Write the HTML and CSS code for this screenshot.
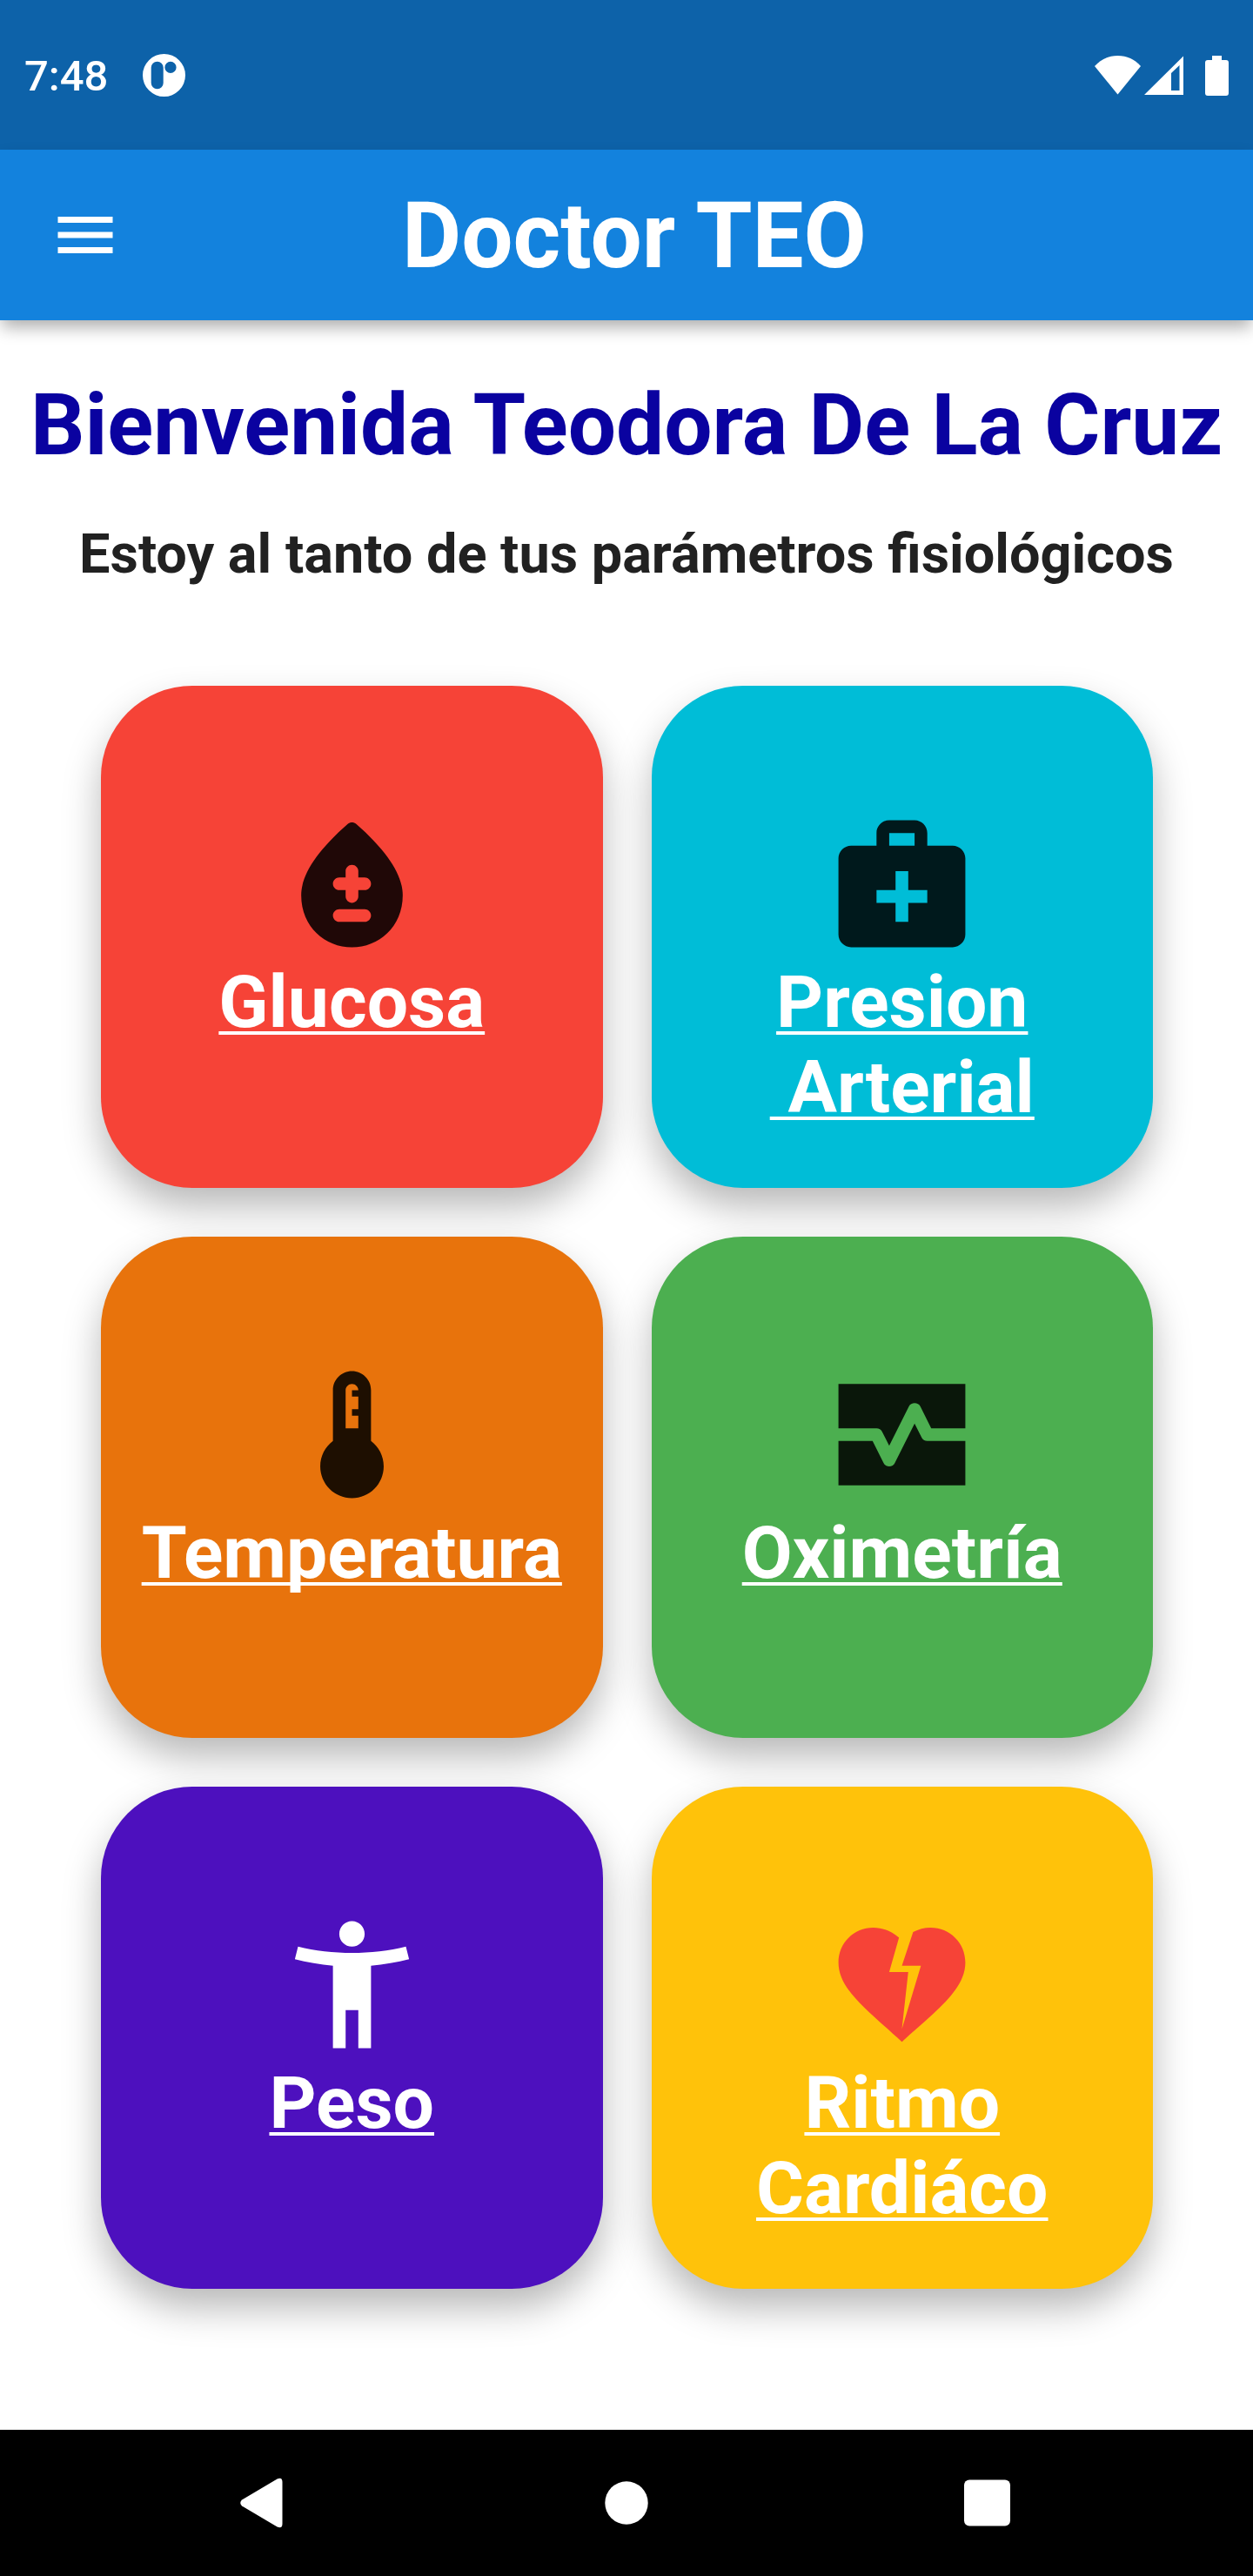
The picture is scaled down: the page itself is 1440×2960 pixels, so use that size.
FILE: index.html
```html
<!DOCTYPE html>
<html lang="es">
<head>
<meta charset="utf-8">
<meta name="viewport" content="width=device-width, initial-scale=1">
<title>Doctor TEO</title>
<link rel="stylesheet" href="styles.css">
</head>
<body>
<div class="status-bar">
  <div class="status-group">
    <time class="clock">7:48</time>
    <svg class="notification-icon" viewBox="0 0 49 49" aria-hidden="true">
      <path fill-rule="evenodd" d="M24.500 0a24.500 24.500 0 1 1 0 49a24.500 24.500 0 1 1 0-49zM16.700 8.700a7 7 0 0 0-7 7v17.500a7 7 0 0 0 14 0v-17.500a7 7 0 0 0-7-7zM32 8.800a6.600 6.600 0 1 0 0 13.200a6.600 6.600 0 1 0 0-13.200z"/>
    </svg>
  </div>
  <svg class="signal-icons" viewBox="0 -1 154 49" aria-hidden="true">
    <path d="M0 13C7 5 16 1 26.500 1S46 5 53 13L26.500 45.500z"/>
    <path fill-rule="evenodd" d="M57 46L102 1.500V46zM88 21v20h9.500V12z"/>
    <path d="M135 1h11v5h5q3 0 3 3v35q0 3-3 3h-21q-3 0-3-3V9q0-3 3-3h5z"/>
  </svg>
</div>

<header class="app-bar">
  <button class="menu-button" type="button" aria-label="Abrir menú">
    <svg viewBox="0 0 24 24" aria-hidden="true"><path d="M3 18h18v-2H3v2zm0-5h18v-2H3v2zm0-7v2h18V6H3z"/></svg>
  </button>
  <h1 class="app-title">Doctor TEO</h1>
</header>

<main class="content">
  <h2 class="welcome">Bienvenida Teodora De La Cruz</h2>
  <p class="subtitle">Estoy al tanto de tus parámetros fisiológicos</p>

  <nav class="card-grid" aria-label="Parámetros">
    <a class="card card-glucose" href="#glucosa">
      <svg class="card-icon" viewBox="0 0 24 24" aria-hidden="true"><path fill-rule="evenodd" d="M12.660 2.580c-.38-.33-.95-.33-1.320 0C6.450 6.880 4 10.620 4 13.800c0 4.980 3.800 8.200 8 8.200s8-3.220 8-8.200c0-3.180-2.450-6.920-7.340-11.220zM14 18h-4c-.55 0-1-.45-1-1s.45-1 1-1h4c.55 0 1 .45 1 1s-.45 1-1 1zM14 13h-1v1c0 .55-.45 1-1 1s-1-.45-1-1v-1h-1c-.55 0-1-.45-1-1s.45-1 1-1h1v-1c0-.55.45-1 1-1s1 .45 1 1v1h1c.55 0 1 .45 1 1s-.45 1-1 1z"/></svg>
      <span class="card-label">Glucosa</span>
    </a>
    <a class="card card-pressure" href="#presion">
      <svg class="card-icon" viewBox="0 0 24 24" aria-hidden="true"><path fill-rule="evenodd" d="M20 6h-4V4c0-1.100-.9-2-2-2h-4c-1.100 0-2 .9-2 2v2H4c-1.100 0-2 .9-2 2v12c0 1.100.9 2 2 2h16c1.100 0 2-.9 2-2V8c0-1.100-.9-2-2-2zM10 4h4v2h-4V4zm6 11h-3v3h-2v-3H8v-2h3v-3h2v3h3v2z"/></svg>
      <span class="card-label">Presion<br>&nbsp;Arterial</span>
    </a>
    <a class="card card-temperature" href="#temperatura">
      <svg class="card-icon" viewBox="0 0 24 24" aria-hidden="true"><path fill-rule="evenodd" d="M15 13V5c0-1.660-1.340-3-3-3S9 3.340 9 5v8c-1.210.91-2 2.370-2 4 0 2.760 2.240 5 5 5s5-2.240 5-5c0-1.630-.79-3.090-2-4zm-4-8c0-.55.45-1 1-1s1 .45 1 1h-1v1h1v2h-1v1h1v2h-2V5z"/></svg>
      <span class="card-label">Temperatura</span>
    </a>
    <a class="card card-oximetry" href="#oximetria">
      <svg class="card-icon" viewBox="0 0 24 24" aria-hidden="true"><path d="M15.110 12.450 14 10.240l-3.110 6.210c-.16.34-.51.55-.89.55s-.73-.21-.89-.55L7.380 13H2v7h20v-7h-6c-.38 0-.73-.21-.89-.55zM22 4H2v7h6c.38 0 .73.21.89.55L10 13.760l3.110-6.210c.34-.68 1.450-.68 1.790 0L16.620 11H22V4z"/></svg>
      <span class="card-label">Oximetría</span>
    </a>
    <a class="card card-weight" href="#peso">
      <svg class="card-icon" viewBox="0 0 24 24" aria-hidden="true"><path d="M20.500 6c-2.610.7-5.670 1-8.500 1s-5.890-.3-8.500-1L3 8c1.860.5 4 .83 6 1v13h2v-6h2v6h2V9c2-.17 4.140-.5 6-1l-.5-2zM12 6c1.100 0 2-.9 2-2s-.9-2-2-2-2 .9-2 2 .9 2 2 2z"/></svg>
      <span class="card-label">Peso</span>
    </a>
    <a class="card card-heart" href="#ritmo">
      <svg class="card-icon" viewBox="0 0 24 24" aria-hidden="true"><path d="M16.500 3c-.96 0-1.900.25-2.730.69L12 9h3l-3 10 1-9h-3l1.540-5.390C10.470 3.610 9.010 3 7.500 3 4.420 3 2 5.420 2 8.500c0 4.130 4.160 7.180 10 12.500 5.470-4.940 10-8.260 10-12.500C22 5.420 19.580 3 16.500 3z"/></svg>
      <span class="card-label">Ritmo<br>Cardiáco</span>
    </a>
  </nav>
</main>

<footer class="system-nav">
  <button type="button" aria-label="Atrás"><svg viewBox="0 0 84 84" aria-hidden="true"><path d="M16 38.500L56.500 14.500Q62.500 12 62.500 18V66Q62.500 72 56.500 69.500L16 45.500Q12.500 42 16 38.500z"/></svg></button>
  <button type="button" aria-label="Inicio"><svg viewBox="0 0 84 84" aria-hidden="true"><circle cx="42" cy="42" r="24.700"/></svg></button>
  <button type="button" aria-label="Recientes"><svg viewBox="0 0 84 84" aria-hidden="true"><rect x="14" y="15.500" width="53" height="53" rx="6"/></svg></button>
</footer>
</body>
</html>
```

FILE: styles.css
```css
* {
  box-sizing: border-box;
}

body {
  margin: 0;
  min-height: 100vh;
  display: flex;
  flex-direction: column;
  background: #fff;
  color: #212121;
  font-family: Roboto, "Liberation Sans", sans-serif;
}

svg {
  display: block;
  fill: currentColor;
}

button {
  padding: 0;
  border: 0;
  background: none;
  color: inherit;
  cursor: pointer;
}

h1,
h2,
p {
  margin: 0;
}

.status-bar {
  height: 172px;
  padding: 0 28px;
  display: flex;
  align-items: center;
  justify-content: space-between;
  background: #0d62a9;
  color: #fff;
}

.status-group {
  display: flex;
  align-items: center;
  gap: 40px;
}

.clock {
  padding-top: 4px;
  font-size: 49px;
  line-height: 58px;
  font-weight: 500;
}

.notification-icon {
  width: 49px;
  height: 49px;
}

.signal-icons {
  width: 154px;
  height: 49px;
}

.app-bar {
  height: 196px;
  padding: 0 178px 0 56px;
  display: flex;
  align-items: center;
  background: #1382dd;
  color: #fff;
  box-shadow: 0 10px 18px -2px rgba(0, 0, 0, 0.32);
}

.menu-button svg {
  width: 84px;
  height: 84px;
}

.menu-button {
  width: 140px;
}

.app-title {
  flex: 1;
  padding-top: 4px;
  text-align: center;
  font-size: 105px;
  line-height: 124px;
  font-weight: 700;
}

.content {
  flex: 1;
  padding-top: 63px;
  text-align: center;
}

.welcome {
  color: #0a02a0;
  font-size: 98px;
  line-height: 115px;
  font-weight: 700;
}

.subtitle {
  margin-top: 54px;
  font-size: 63px;
  line-height: 74px;
  font-weight: 700;
}

.card-grid {
  display: grid;
  grid-template-columns: 1fr 1fr;
  gap: 56px;
  padding: 114px 115px 56px 116px;
}

.card {
  aspect-ratio: 1;
  padding-top: 140px;
  display: flex;
  flex-direction: column;
  align-items: center;
  border-radius: 105px;
  box-shadow: 0 22px 44px rgba(0, 0, 0, 0.28);
  color: #fff;
  text-decoration: none;
}

.card-icon {
  width: 175px;
  height: 175px;
  flex: none;
  color: rgba(0, 0, 0, 0.87);
}

.card-label {
  font-size: 84px;
  line-height: 98px;
  font-weight: 700;
  text-decoration: underline;
  text-decoration-thickness: 4px;
  text-underline-offset: 5px;
  text-decoration-skip-ink: none;
}

.card-glucose {
  background: #f64337;
}

.card-pressure {
  background: #00bdd7;
}

.card-temperature {
  background: #e8730c;
}

.card-oximetry {
  background: #4caf50;
}

.card-weight {
  background: #4d10be;
}

.card-weight .card-icon {
  color: #fff;
}

.card-heart {
  background: #ffc20a;
}

.card-heart .card-icon {
  color: #f64337;
}

.system-nav {
  height: 168px;
  padding: 0 262px;
  display: flex;
  align-items: center;
  justify-content: space-between;
  background: #000;
  color: #fff;
}

.system-nav svg {
  width: 84px;
  height: 84px;
}
```
